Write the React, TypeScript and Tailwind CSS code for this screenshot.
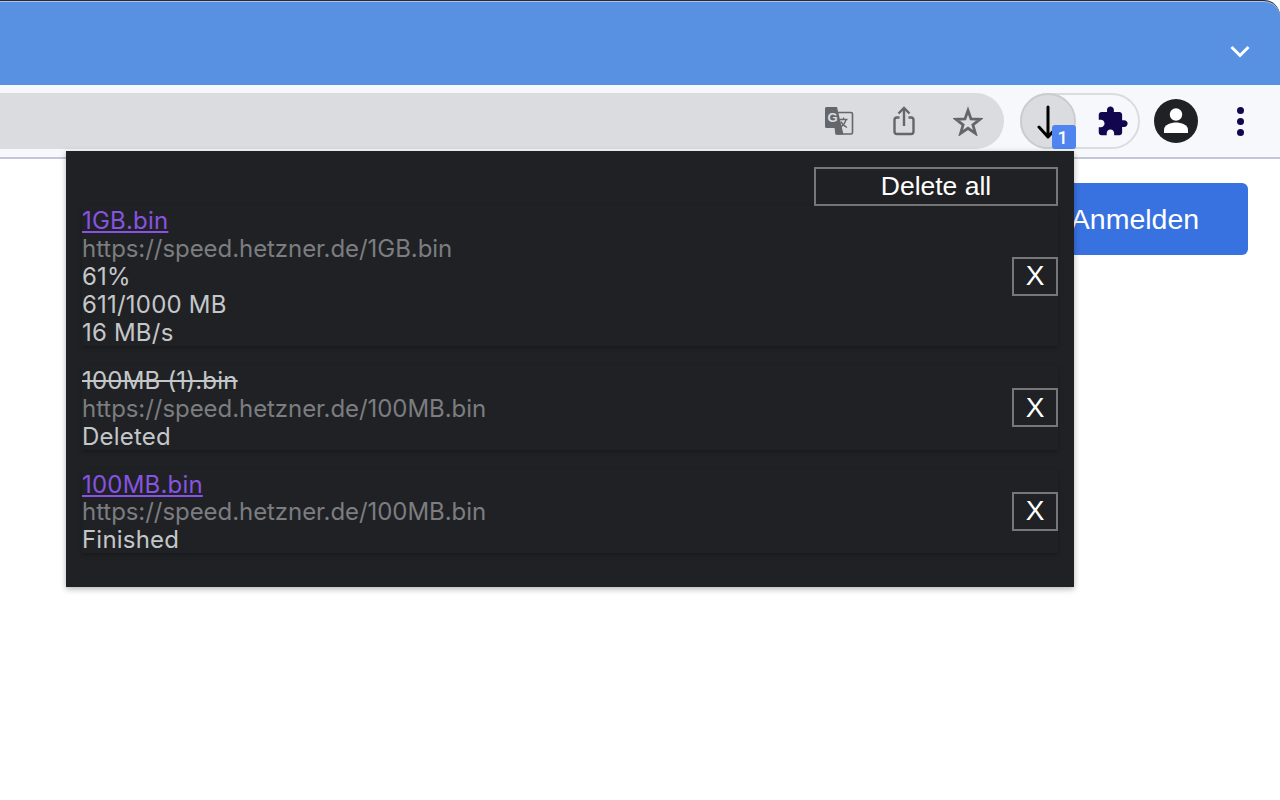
import React from "react";

const downloads = [
  { name: "1GB.bin", url: "https://speed.hetzner.de/1GB.bin", lines: ["61%", "611/1000 MB", "16 MB/s"] },
  { name: "100MB (1).bin", url: "https://speed.hetzner.de/100MB.bin", lines: ["Deleted"], deleted: true },
  { name: "100MB.bin", url: "https://speed.hetzner.de/100MB.bin", lines: ["Finished"] },
];

const TranslateIcon = () => (
  <svg width="30" height="30" viewBox="0 0 30 30" className="block">
    <rect x="12" y="6.5" width="16.5" height="21.5" rx="1.5" fill="none" stroke="#63666a" strokeWidth="1.6" />
    <path d="M2.5 1h10.5l6.5 27.5h-8L10.5 22H2.5A1.5 1.5 0 0 1 1 20.5v-18A1.5 1.5 0 0 1 2.5 1z" fill="#63666a" />
    <text x="3.6" y="16" fontFamily="Liberation Sans, sans-serif" fontSize="13" fontWeight="700" fill="#dadce0">G</text>
    <path d="M15.5 13.5h8M19.5 11.5v2M22 13.5c-.8 3.5-3 6-5.5 7.5M17 15.5c1 2.5 3 4.5 6 6" fill="none" stroke="#63666a" strokeWidth="1.3" />
  </svg>
);

const ShareIcon = () => (
  <svg width="22" height="30" viewBox="0 0 22 30" className="block" fill="none" stroke="#63666a" strokeWidth="2.4">
    <path d="M6.500 11.500H4A2.500 2.500 0 0 0 1.500 14v11.500A2.500 2.500 0 0 0 4 28h14a2.500 2.500 0 0 0 2.500-2.500V14a2.500 2.500 0 0 0-2.500-2.500h-2.500" />
    <path d="M11 20V2.500M5.500 7.500 11 2l5.500 5.500" />
  </svg>
);

const StarIcon = () => (
  <svg width="30" height="30" viewBox="0 0 30 30" className="block" fill="none" stroke="#63666a" strokeWidth="2.800" strokeLinejoin="miter">
    <path d="m15 4.500 3 8.500 9 .3-7.100 5.500 2.500 8.600L15 22.300 7.600 27.400l2.500-8.600L3 13.300l9-.3z" />
  </svg>
);

const ArrowIcon = () => (
  <svg width="26" height="36" viewBox="0 0 26 36" className="block" fill="none" stroke="#000" strokeWidth="3" strokeLinecap="round" strokeLinejoin="round">
    <path d="M14 4v30M5 24l9 10 9-10" />
  </svg>
);

const PuzzleIcon = () => (
  <svg width="33" height="33" viewBox="0 0 24 24" className="block" fill="#12064f">
    <path d="M20.500 11H19V7c0-1.100-.9-2-2-2h-4V3.500C13 2.120 11.880 1 10.500 1S8 2.120 8 3.500V5H4c-1.100 0-1.990.9-1.990 2v3.800H3.500c1.490 0 2.700 1.210 2.700 2.700s-1.210 2.700-2.700 2.700H2V20c0 1.100.9 2 2 2h3.800v-1.500c0-1.490 1.210-2.700 2.700-2.700 1.490 0 2.700 1.210 2.700 2.700V22H17c1.100 0 2-.9 2-2v-4h1.500c1.380 0 2.500-1.120 2.500-2.500S21.880 11 20.500 11z" />
  </svg>
);

const ProfileIcon = () => (
  <svg width="44" height="44" viewBox="0 0 44 44" className="block">
    <circle cx="22" cy="22" r="22" fill="#202124" />
    <circle cx="22" cy="15.500" r="6.200" fill="#fff" />
    <path d="M10 34v-3.500C10 26 17 23.500 22 23.500S34 26 34 30.500V34z" fill="#fff" />
  </svg>
);

export default function App() {
  return (
    <div className="relative flex h-[800px] w-[1280px] flex-col overflow-hidden bg-white font-['Liberation_Sans',sans-serif]">
      {/* window title strip */}
      <div className="flex h-[85px] shrink-0 items-start justify-end rounded-tr-[16px] border-t border-[#2c2c2e] bg-[#5890e2] pr-[30px] pt-[44px] shadow-[inset_0_1px_0_#a9c4ef]">
        <svg width="20" height="13" viewBox="0 0 20 13" className="block" fill="none" stroke="#fff" strokeWidth="3">
          <path d="M1.500 2 10 10.500 18.500 2" />
        </svg>
      </div>

      {/* toolbar */}
      <div className="flex h-[74px] shrink-0 items-center border-b-2 border-[#c4c5d9] bg-[#f6f8fc] pr-[36.500px]">
        <div className="flex h-14 w-[1004px] shrink-0 items-center justify-end rounded-r-full bg-[#dadce0] pr-[21px]">
          <TranslateIcon />
          <div className="ml-[39px]"><ShareIcon /></div>
          <div className="ml-[38px]"><StarIcon /></div>
        </div>
        <div className="relative ml-4 flex h-14 w-[120px] shrink-0 items-center rounded-full border-2 border-[#dadce0]">
          <div className="-ml-[2px] flex h-14 w-14 shrink-0 items-center rounded-full border-2 border-[#cbccd0] bg-[#dadce0] pl-[12px]">
            <ArrowIcon />
          </div>
          <div className="ml-5"><PuzzleIcon /></div>
          <span className="absolute left-[30px] top-[30px] flex h-6 w-6 items-center justify-center rounded-[3px] bg-[#5084ee] pr-[3px] font-['Roboto',sans-serif] text-[18px] font-medium text-white">1</span>
        </div>
        <div className="ml-[14px] shrink-0"><ProfileIcon /></div>
        <div className="ml-[38.500px] flex shrink-0 flex-col gap-[4px]">
          <span className="h-[7px] w-[7px] rounded-full bg-[#12064f]" />
          <span className="h-[7px] w-[7px] rounded-full bg-[#12064f]" />
          <span className="h-[7px] w-[7px] rounded-full bg-[#12064f]" />
        </div>
      </div>

      {/* page behind the popup */}
      <div className="flex flex-1 items-start justify-end pr-8 pt-[24px]">
        <button className="flex h-[72px] w-[226px] items-center justify-center rounded-[6px] bg-[#3871e0] text-[28.500px] text-white">Anmelden</button>
      </div>

      {/* extension popup */}
      <div className="absolute left-[66px] top-[151px] flex w-[1008px] flex-col bg-[#202124] px-4 pb-[34px] pt-[16.300px] shadow-[0_2px_6px_rgba(0,0,0,0.3)]">
        <div className="flex justify-end">
          <button className="h-[39px] w-[244px] border-2 border-[#777] pb-px text-[26.500px] leading-none text-white">Delete all</button>
        </div>
        <div className="flex flex-col gap-5">
          {downloads.map((d) => (
            <div key={d.url + d.name} className="flex items-center justify-between shadow-[0_2px_4px_rgba(0,0,0,0.25)]">
              <div className="-mb-px pt-px font-['Inter',sans-serif] text-[24px] leading-[27.900px] tracking-[0.2px] text-[#c4c7c9]">
                {d.deleted ? (
                  <div className="line-through">{d.name}</div>
                ) : (
                  <a className="block w-fit text-[#8654e0] underline">{d.name}</a>
                )}
                <div className="tracking-[-0.06px] text-[#7b7d80]">{d.url}</div>
                {d.lines.map((l) => (
                  <div key={l}>{l}</div>
                ))}
              </div>
              <button className="h-[39px] w-[46px] shrink-0 border-2 border-[#777] text-[28px] leading-none text-white">X</button>
            </div>
          ))}
        </div>
      </div>
    </div>
  );
}
